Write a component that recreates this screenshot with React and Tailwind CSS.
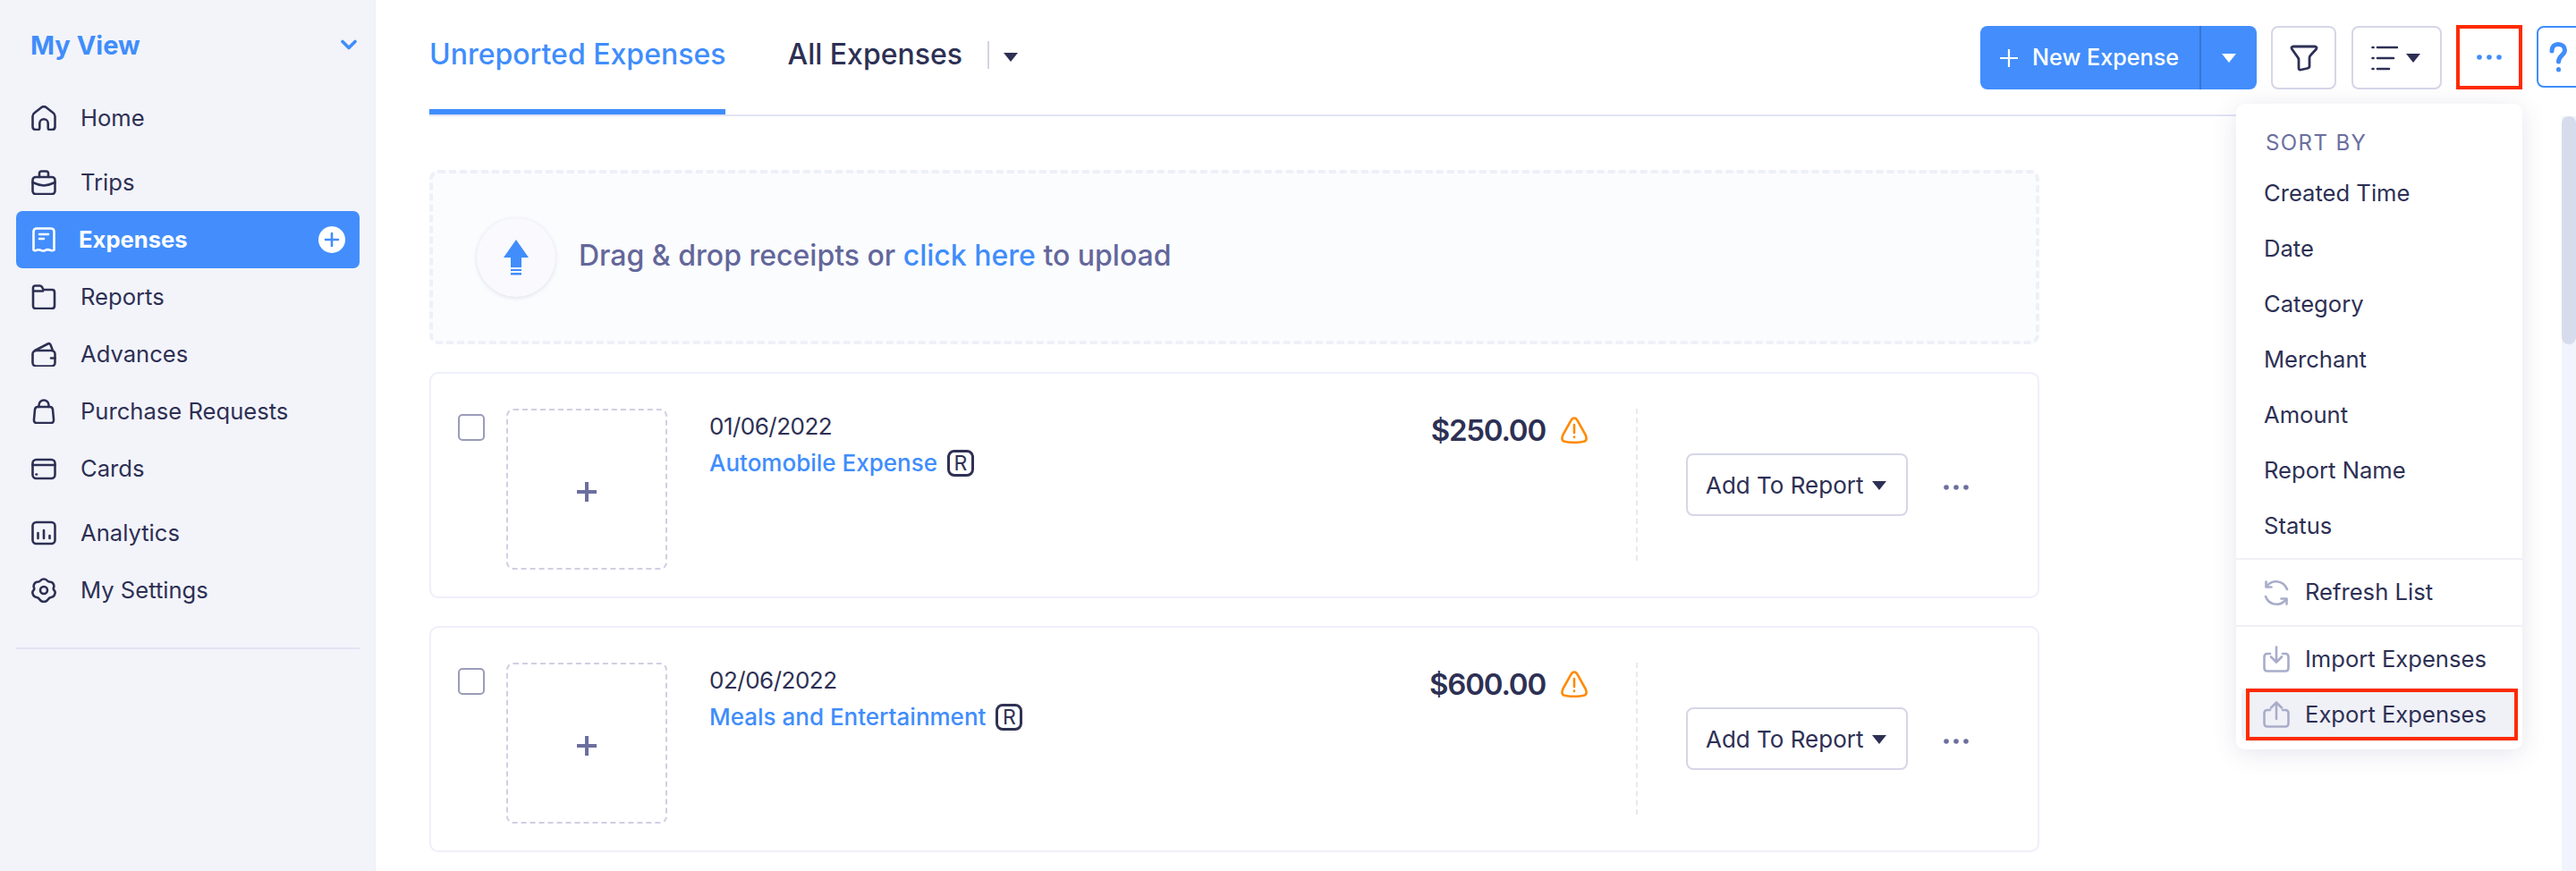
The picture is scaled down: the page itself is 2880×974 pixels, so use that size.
import React from "react";

const Ico = ({ children, className = "", size = 28, vb = 28, sw = 2.6 }) => (
  <svg width={size} height={size} viewBox={`0 0 ${vb} ${vb}`} fill="none" stroke="currentColor" strokeWidth={sw} strokeLinecap="round" strokeLinejoin="round" className={"shrink-0 " + className}>
    {children}
  </svg>
);

const icons = {
  home: <path d="M1.5 12 Q1.5 9.8 3.5 8.2 L11.5 2 Q14 0.4 16.5 2 L24.5 8.2 Q26.5 9.8 26.5 12 V23.5 Q26.5 27 23 27 H20.5 Q18.7 27 18.7 25 V20 A4.7 4.7 0 0 0 9.3 20 V25 Q9.3 27 7.5 27 H5 Q1.5 27 1.5 23.5 Z" />,
  trips: <g><rect x="1.5" y="8" width="25" height="19" rx="3.5" /><path d="M9 8 V4 Q9 1.5 11.5 1.5 H16.5 Q19 1.5 19 4 V8" /><path d="M1.5 14 Q8 17 14 17.5 Q20 17 26.500 14" /></g>,
  receipt: <g><path d="M2.500 25.500 V5 Q2.500 1.500 6 1.500 H22 Q25.500 1.500 25.500 5 V25.500 Q23 27 21 25.700 Q18 24.500 15.500 26 Q13 27 10.500 25.800 Q7.500 24.500 5.500 26 Q3.500 26.700 2.500 25.500 Z" /><path d="M9 8 H19 M9 13 H14" /></g>,
  reports: <path d="M2 7 V4 Q2 1.500 4.500 1.500 H9.500 Q11 1.500 12 3 L13.500 6 H23.500 Q26 6 26 9 V23.500 Q26 27 23 27 H5 Q2 27 2 24 Z M2 7.500 H13" />,
  wallet: <g><rect x="1.500" y="10" width="25" height="17.500" rx="4" /><path d="M4 10 L18.500 2.500 Q20.500 1.500 21.500 3.500 L24 10" /><path d="M22 18.500 H26.500" /></g>,
  bag: <g><path d="M7 9 H21 Q23.500 9 24 12 L25 23 Q25.300 27 22 27 H6 Q2.700 27 3 23 L4 12 Q4.500 9 7 9 Z" /><path d="M8.500 9 V7 A5.500 5.500 0 0 1 19.500 7 V9" /></g>,
  card: <g><rect x="1.500" y="4" width="25" height="21" rx="4" /><path d="M1.500 10 H26.500" /><path d="M5.500 20.500 H6" /></g>,
  chart: <g><rect x="1.500" y="2" width="25" height="24" rx="4" /><path d="M7.500 14 V20 M14 11 V20 M20.500 17 V20" /></g>,
  gear: <g><path d="M14 1.500 Q16.500 1.500 18 3.500 Q19 4.800 21 4.800 Q24 4.900 25 7.700 Q25.700 10 25 11 Q24.300 12.700 25.500 14 Q27.500 16 26 19 Q25 21.500 22 22 Q20 22.300 19 24 Q17 27 14 27 Q11 27 9 24 Q8 22.300 6 22 Q3 21.500 2 19 Q0.500 16 2.500 14 Q3.700 12.700 3 11 Q2.300 10 3 7.700 Q4 4.900 7 4.800 Q9 4.800 10 3.500 Q11.500 1.500 14 1.500 Z" /><circle cx="14" cy="14" r="4" /></g>,
};

const NavItem = ({ icon, label, active, className = "" }) => (
  <div className={"flex h-[64px] items-center rounded-[7px] pl-[17px] " + (active ? "bg-[#438efc] text-white " : "text-[#2d3054] ") + className}>
    <Ico>{icons[icon]}</Ico>
    <span className={active ? "ml-[25px] text-[25.6px] font-bold" : "ml-[27px] text-[25.6px]"}>{label}</span>
    {active && (
      <span className="ml-auto mr-[16px] flex h-[30px] w-[30px] items-center justify-center rounded-full bg-white text-[#438efc]">
        <Ico size={18} vb={18} sw={2.6}><path d="M9 2 V16 M2 9 H16" /></Ico>
      </span>
    )}
  </div>
);

const Caret = ({ className = "" }) => (
  <svg width="16" height="10" viewBox="0 0 16 10" className={"shrink-0 fill-current " + className}><path d="M0 0 H16 L8 10 Z" /></svg>
);

const Dots = ({ className = "" }) => (
  <svg width="28" height="6" viewBox="0 0 28 6" className={"shrink-0 fill-current " + className}><circle cx="3" cy="3" r="2.800" /><circle cx="14" cy="3" r="2.800" /><circle cx="25" cy="3" r="2.800" /></svg>
);

const ExpenseCard = ({ date, name, amount, className = "" }) => (
  <div className={"flex h-[253px] items-start rounded-[10px] border-2 border-[#eeeff9] bg-white pl-[30px] pr-[77px] " + className}>
    <div className="mt-[45px] h-[30px] w-[30px] shrink-0 rounded-[5px] border-2 border-[#9a9cb8]" />
    <div className="ml-[24px] mt-[39px] flex h-[180px] w-[180px] shrink-0 items-center justify-center rounded-[8px] border-2 border-dashed border-[#cfcfe3] pt-[6px] text-[#6b6f9f]">
      <Ico size={24} vb={24} sw={4}><path d="M12 1 V23 M1 12 H23" strokeLinecap="butt" /></Ico>
    </div>
    <div className="ml-[47px] mt-[41px]">
      <div className="text-[26px] leading-[36px] tracking-[-0.5px] text-[#2d3054]">{date}</div>
      <div className="mt-[5px] flex items-center">
        <span className="text-[26px] font-medium leading-[36px] text-[#408dfb]">{name}</span>
        <span className="ml-[11px] flex h-[30px] w-[30px] items-center justify-center rounded-[8px] border-[3px] border-[#2f3153] text-[23px] leading-none text-[#2f3153]">R</span>
      </div>
    </div>
    <div className="ml-auto mt-[43px] flex items-center">
      <span className="text-[33px] font-semibold leading-[40px] tracking-[-1.2px] text-[#2d3054]">{amount}</span>
      <svg width="30" height="30" viewBox="0 0 30 30" fill="none" stroke="#ff8a00" strokeWidth="2.600" strokeLinecap="round" className="ml-[17px] shrink-0">
        <path d="M15 1.500 Q17.500 1.500 19 5 L27.500 20 Q30 26 26.500 27.500 Q21 29 15 28.700 Q9 29 3.500 27.500 Q0 26 2.500 20 L11 5 Q12.500 1.500 15 1.500 Z" />
        <path d="M15 9 V18 M15 22.500 V23" />
      </svg>
    </div>
    <div className="ml-[54px] mt-[39px] h-[170px] w-0 shrink-0 border-l-2 border-dashed border-[#e8e8f0]" />
    <div className="ml-[54px] mt-[89px] flex h-[70px] w-[248px] shrink-0 items-center rounded-[8px] border-2 border-[#d6d6e8] pl-[20px] pt-[1px] text-[#2d3054]">
      <span className="text-[26px] leading-none">Add To Report</span>
      <Caret className="ml-[10px]" />
    </div>
    <Dots className="ml-[40px] mt-[124px] text-[#6b6f9f]" />
  </div>
);

const MenuRow = ({ children }) => (
  <div className="flex h-[62px] items-center pl-[31px] text-[25.6px] text-[#2d3054]">{children}</div>
);

const RefreshIcon = () => (
  <Ico size={30} vb={30} sw={2.600} className="text-[#a9adca]">
    <path d="M4 8 A13 13 0 0 1 27 11" />
    <path d="M3.500 2.500 V8.500 H9.500" />
    <path d="M26 22 A13 13 0 0 1 3 19" />
    <path d="M26.500 27.500 V21.500 H20.500" />
  </Ico>
);
const ImportIcon = () => (
  <Ico size={30} vb={30} sw={2.600} className="text-[#a9adca]">
    <path d="M8 9 H5 Q1.500 9 1.500 12.500 V25 Q1.500 28.500 5 28.500 H25 Q28.500 28.500 28.500 25 V12.500 Q28.500 9 25 9 H22" />
    <path d="M15 1.500 V18 M9 12.500 L15 18.500 L21 12.500" />
  </Ico>
);
const ExportIcon = () => (
  <Ico size={30} vb={30} sw={2.600} className="text-[#a9adca]">
    <path d="M8 10 H5 Q1.500 10 1.500 13.500 V25 Q1.500 28.500 5 28.500 H25 Q28.500 28.500 28.500 25 V13.500 Q28.500 10 25 10 H22" />
    <path d="M15 20 V1.500 M9 7.500 L15 1.500 L21 7.500" />
  </Ico>
);

export default function App() {
  return (
    <div className="relative flex h-[974px] w-[2880px] overflow-hidden bg-white font-['Inter',sans-serif] text-[#2d3054]">
      {/* Sidebar */}
      <aside className="h-full w-[420px] shrink-0 border-r-2 border-[#eff0f8] bg-[#f3f4fa] pl-[18px] pr-[16px]">
        <div className="flex h-[100px] items-center pl-[16px] pr-[3px] text-[#408dfb]">
          <span className="text-[29px] font-bold leading-none">My View</span>
          <Ico size={18} vb={18} sw={3.600} className="ml-auto"><path d="M2 5.500 L9 12.500 L16 5.500" /></Ico>
        </div>
        <NavItem icon="home" label="Home" />
        <NavItem icon="trips" label="Trips" className="mt-[8px]" />
        <NavItem icon="receipt" label="Expenses" active />
        <NavItem icon="reports" label="Reports" />
        <NavItem icon="wallet" label="Advances" />
        <NavItem icon="bag" label="Purchase Requests" />
        <NavItem icon="card" label="Cards" />
        <NavItem icon="chart" label="Analytics" className="mt-[8px]" />
        <NavItem icon="gear" label="My Settings" />
        <div className="mt-[32px] h-[2px] bg-[#e1e2f2]" />
      </aside>

      {/* Main */}
      <main className="flex h-full min-w-0 flex-1 flex-col">
        <header className="mx-[60px] flex h-[130px] shrink-0 items-start border-b-2 border-[#e1e3f3]">
          <div className="flex h-[128px] items-center border-b-[6px] border-[#408dfb] text-[32px] font-medium text-[#408dfb]">Unreported Expenses</div>
          <div className="ml-[69px] flex h-[122px] items-center">
            <span className="text-[32px] font-medium text-[#2d3054]">All Expenses</span>
            <span className="ml-[28px] h-[31px] w-[2px] bg-[#d3d4e4]" />
            <Caret className="ml-[16px] mt-[6px] text-[#2d3054]" />
          </div>
          <div className="ml-auto mr-[-76px] flex items-start pt-[29px]">
            <div className="flex h-[71px] w-[309px] items-center rounded-[8px] bg-[#438efc] text-white">
              <Ico size={20} vb={20} sw={2.200} className="ml-[22px]"><path d="M10 0.500 V19.500 M0.500 10 H19.500" /></Ico>
              <span className="ml-[16px] text-[25.2px] font-medium">New Expense</span>
              <span className="ml-auto h-full w-[2px] bg-[#3676d4]" />
              <Caret className="mx-[23px]" />
            </div>
            <div className="ml-[16px] flex h-[71px] w-[73px] items-center justify-center rounded-[8px] border-2 border-[#d6d6e8]">
              <svg width="32" height="32" viewBox="0 0 32 32" fill="none" stroke="#2d3054" strokeWidth="2.800" strokeLinejoin="round" strokeLinecap="round">
                <path d="M3.500 3 Q1 3.500 2.500 6 L8.500 14.500 Q10 16 10 18 V27 Q10 29.500 12.500 29 L19.500 27.500 Q22 27 22 25 V15.500 Q22 14 23.500 12.500 L29.500 6 Q31 3.500 28.500 3 Z" />
              </svg>
            </div>
            <div className="ml-[17px] flex h-[71px] w-[101px] items-center rounded-[8px] border-2 border-[#d6d6e8] pl-[20px]">
              <svg width="30" height="30" viewBox="0 0 30 30" fill="none" stroke="#2d3054" strokeWidth="2.600" strokeLinecap="round">
                <path d="M1.500 3 H2.500 M7 3 H29 M1.500 15 H2.500 M7 15 H25 M1.500 27 H2.500 M7 27 H20" />
              </svg>
              <Caret className="ml-[9px] text-[#2d3054]" />
            </div>
            <div className="ml-[16px] flex h-[72px] w-[74px] -translate-y-px items-center justify-center border-4 border-[#ff2a00] text-[#408dfb]">
              <Dots />
            </div>
            <div className="ml-[16px] flex h-[69px] w-[60px] items-center rounded-[8px] border-2 border-[#408dfb] pl-[12px] text-[#408dfb]">
              <svg width="20" height="34" viewBox="0 0 20 34" fill="none" stroke="currentColor" strokeWidth="5" strokeLinecap="round">
                <path d="M3 10 C3 5 6 2.500 10 2.500 C14.500 2.500 17.500 5.500 17.500 9 C17.500 15 10.500 15 10.500 22" />
                <path d="M10.500 30.500 V31" />
              </svg>
            </div>
          </div>
        </header>

        <div className="flex min-h-0 flex-1">
          <div className="ml-[60px] w-[1800px] shrink-0 pt-[60px]">
            <div className="flex h-[195px] items-center rounded-[10px] border-4 border-dashed border-[#eef0f9] bg-[#fbfcfe] pl-[49px]">
              <div className="flex h-[88px] w-[88px] items-center justify-center rounded-full bg-[#f9f9fe] shadow-[0_1px_5px_rgba(60,60,120,0.15)]">
                <svg width="28" height="40" viewBox="0 0 28 40" className="fill-[#408dfb]">
                  <path d="M14 0 L28 20 H20 V31 H8 V20 H0 Z" />
                  <path d="M8 33 H20 V35 H8 Z M8 37 H20 V39.500 H8 Z" />
                </svg>
              </div>
              <div className="ml-[26px] pb-[4px] text-[32px] font-medium text-[#63679a]">
                Drag &amp; drop receipts or <span className="text-[#408dfb]">click here</span> to upload
              </div>
            </div>
            <ExpenseCard className="mt-[31px]" date="01/06/2022" name="Automobile Expense" amount="$250.00" />
            <ExpenseCard className="mt-[31px]" date="02/06/2022" name="Meals and Entertainment" amount="$600.00" />
          </div>
          <div className="ml-auto h-full w-[16px] shrink-0 bg-[#f1f4fc]">
            <div className="h-[255px] rounded-[8px] bg-[#d7dcec]" />
          </div>
        </div>
      </main>

      {/* Overflow menu */}
      <div className="absolute left-[2500px] top-[116px] h-[722px] w-[320px] rounded-[10px] bg-white shadow-[0_4px_28px_rgba(60,60,120,0.13)]">
        <div className="flex h-[69px] items-center pl-[33px] pt-[19px] text-[24px] uppercase leading-none tracking-[1.400px] text-[#6b6f9f]">Sort By</div>
        <MenuRow>Created Time</MenuRow>
        <MenuRow>Date</MenuRow>
        <MenuRow>Category</MenuRow>
        <MenuRow>Merchant</MenuRow>
        <MenuRow>Amount</MenuRow>
        <MenuRow>Report Name</MenuRow>
        <MenuRow>Status</MenuRow>
        <div className="mt-[5px] h-[2px] bg-[#eff0f6]" />
        <div className="flex h-[73px] items-center pl-[30px] text-[25.6px] text-[#2d3054]">
          <RefreshIcon /><span className="ml-[17px]">Refresh List</span>
        </div>
        <div className="h-[2px] bg-[#eff0f6]" />
        <div className="mt-[5px] flex h-[62px] items-center pl-[30px] text-[25.6px] text-[#2d3054]">
          <ImportIcon /><span className="ml-[17px]">Import Expenses</span>
        </div>
        <div className="relative mx-[6px] mt-[1px] flex h-[60px] items-center rounded-[8px] bg-[#f0f1f7] pl-[24px] text-[25.6px] text-[#2d3054]">
          <ExportIcon /><span className="ml-[17px]">Export Expenses</span>
          <div className="absolute -right-px left-[5px] top-[1px] h-[58px] border-4 border-[#ff2a00]" />
        </div>
      </div>
    </div>
  );
}
